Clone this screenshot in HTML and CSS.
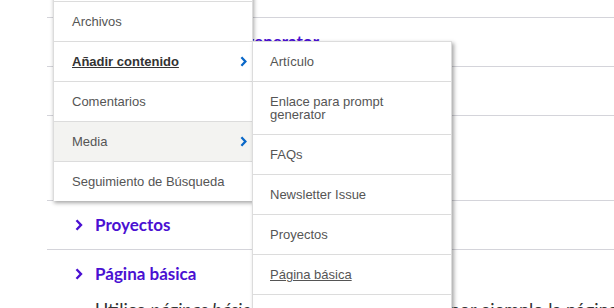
FILE: index.html
```html
<!DOCTYPE html>
<html lang="es">
<head>
<meta charset="utf-8">
<title>Añadir contenido</title>
<link rel="stylesheet" href="styles.css">
</head>
<body>
<main class="page">
  <ul class="types">
    <li class="type">
      <div class="type-head"><svg class="type-chev" viewBox="0 0 8 12"><path d="M1.5 1.2 6 6 1.5 10.8"/></svg><a class="type-link" href="#">Enlace para prompt generator</a></div>
    </li>
    <li class="type">
      <div class="type-head"><svg class="type-chev" viewBox="0 0 8 12"><path d="M1.5 1.2 6 6 1.5 10.8"/></svg><a class="type-link" href="#">FAQs</a></div>
    </li>
    <li class="type has-desc">
      <div class="type-head"><svg class="type-chev" viewBox="0 0 8 12"><path d="M1.5 1.2 6 6 1.5 10.8"/></svg><a class="type-link" href="#">Newsletter Issue</a></div>
      <p class="type-desc">Un número del boletín.</p>
    </li>
    <li class="type">
      <div class="type-head"><svg class="type-chev" viewBox="0 0 8 12"><path d="M1.5 1.2 6 6 1.5 10.8"/></svg><a class="type-link" href="#">Proyectos</a></div>
    </li>
    <li class="type has-desc">
      <div class="type-head"><svg class="type-chev" viewBox="0 0 8 12"><path d="M1.5 1.2 6 6 1.5 10.8"/></svg><a class="type-link" href="#">Página básica</a></div>
      <p class="type-desc">Utilice <em>páginas básicas</em> para su contenido fijo, por ejemplo la página 'Acerca de'.</p>
    </li>
  </ul>
</main>

<nav class="menu">
  <ul class="menu-list">
    <li class="menu-item"><span>Contenido</span></li>
    <li class="menu-item"><span>Archivos</span></li>
    <li class="menu-item is-active"><span class="menu-label">Añadir contenido</span><svg class="menu-chev" viewBox="0 0 7 11"><path d="M1.4 1.3 5.4 5.5 1.4 9.7"/></svg></li>
    <li class="menu-item"><span>Comentarios</span></li>
    <li class="menu-item is-hover"><span>Media</span><svg class="menu-chev" viewBox="0 0 7 11"><path d="M1.4 1.3 5.4 5.5 1.4 9.7"/></svg></li>
    <li class="menu-item"><span>Seguimiento de Búsqueda</span></li>
  </ul>
</nav>

<nav class="submenu">
  <ul class="menu-list">
    <li class="sub-item">Artículo</li>
    <li class="sub-item">Enlace para prompt generator</li>
    <li class="sub-item">FAQs</li>
    <li class="sub-item">Newsletter Issue</li>
    <li class="sub-item">Proyectos</li>
    <li class="sub-item is-underlined">Página básica</li>
    <li class="sub-item">Webform</li>
  </ul>
</nav>
</body>
</html>
```

FILE: styles.css
```css
* { box-sizing: border-box; }

html, body {
  margin: 0;
  padding: 0;
  background: #ffffff;
  overflow: hidden;
}

body {
  width: 614px;
  height: 308px;
  position: relative;
  font-family: "Liberation Sans", Arial, sans-serif;
}

.page {
  padding: 17px 0 0 47px;
}

.types {
  list-style: none;
  margin: 0;
  padding: 0;
}

.type {
  border-top: 1px solid #d4d4da;
  padding: 12px 0 12px 0;
}

.type.has-desc {
  padding-bottom: 13px;
}

.type-head {
  display: flex;
  align-items: center;
  height: 24px;
}

.type-chev {
  width: 8px;
  height: 12px;
  margin-left: 28px;
  margin-right: 12px;
  fill: none;
  stroke: #4a10d2;
  stroke-width: 2.4;
}

.type-link {
  font-family: Lato, "Open Sans", sans-serif;
  font-weight: 700;
  font-size: 17px;
  line-height: 24px;
  color: #4a10d2;
  text-decoration: none;
}

.type-desc {
  margin: 11px 0 0 48px;
  font-family: Lato, "Open Sans", sans-serif;
  font-size: 18px;
  line-height: 24px;
  color: #333333;
  white-space: nowrap;
}

.menu-list {
  list-style: none;
  margin: 0;
  padding: 0;
}

.menu {
  position: absolute;
  left: 53px;
  top: -38px;
  width: 200px;
  background: #ffffff;
  border-left: 1px solid #dcdcdc;
  border-right: 1px solid #dcdcdc;
  box-shadow: 1px 2px 4px rgba(0, 0, 0, 0.35);
  z-index: 2;
}

.menu-item {
  display: flex;
  align-items: center;
  justify-content: space-between;
  padding: 13px 5px 13px 18px;
  border-bottom: 1px solid #dcdcdc;
  font-size: 13px;
  line-height: 13px;
  color: #555555;
}

.menu-item:last-child {
  border-bottom: 0;
}

.menu-item.is-active .menu-label {
  font-weight: 700;
  color: #333333;
  text-decoration: underline;
}

.menu-item.is-hover {
  background: #f3f3f1;
}

.menu-chev {
  width: 7px;
  height: 11px;
  fill: none;
  stroke: #0a68c8;
  stroke-width: 2.3;
}

.submenu {
  position: absolute;
  left: 252px;
  top: 41px;
  width: 200px;
  background: #ffffff;
  border: 1px solid #dcdcdc;
  box-shadow: 2px 2px 4px rgba(0, 0, 0, 0.35);
  z-index: 3;
}

.sub-item {
  padding: 13px 20px 13px 17px;
  border-bottom: 1px solid #dcdcdc;
  font-size: 13px;
  line-height: 13px;
  color: #555555;
}

.sub-item.is-underlined {
  text-decoration: underline;
}
```
